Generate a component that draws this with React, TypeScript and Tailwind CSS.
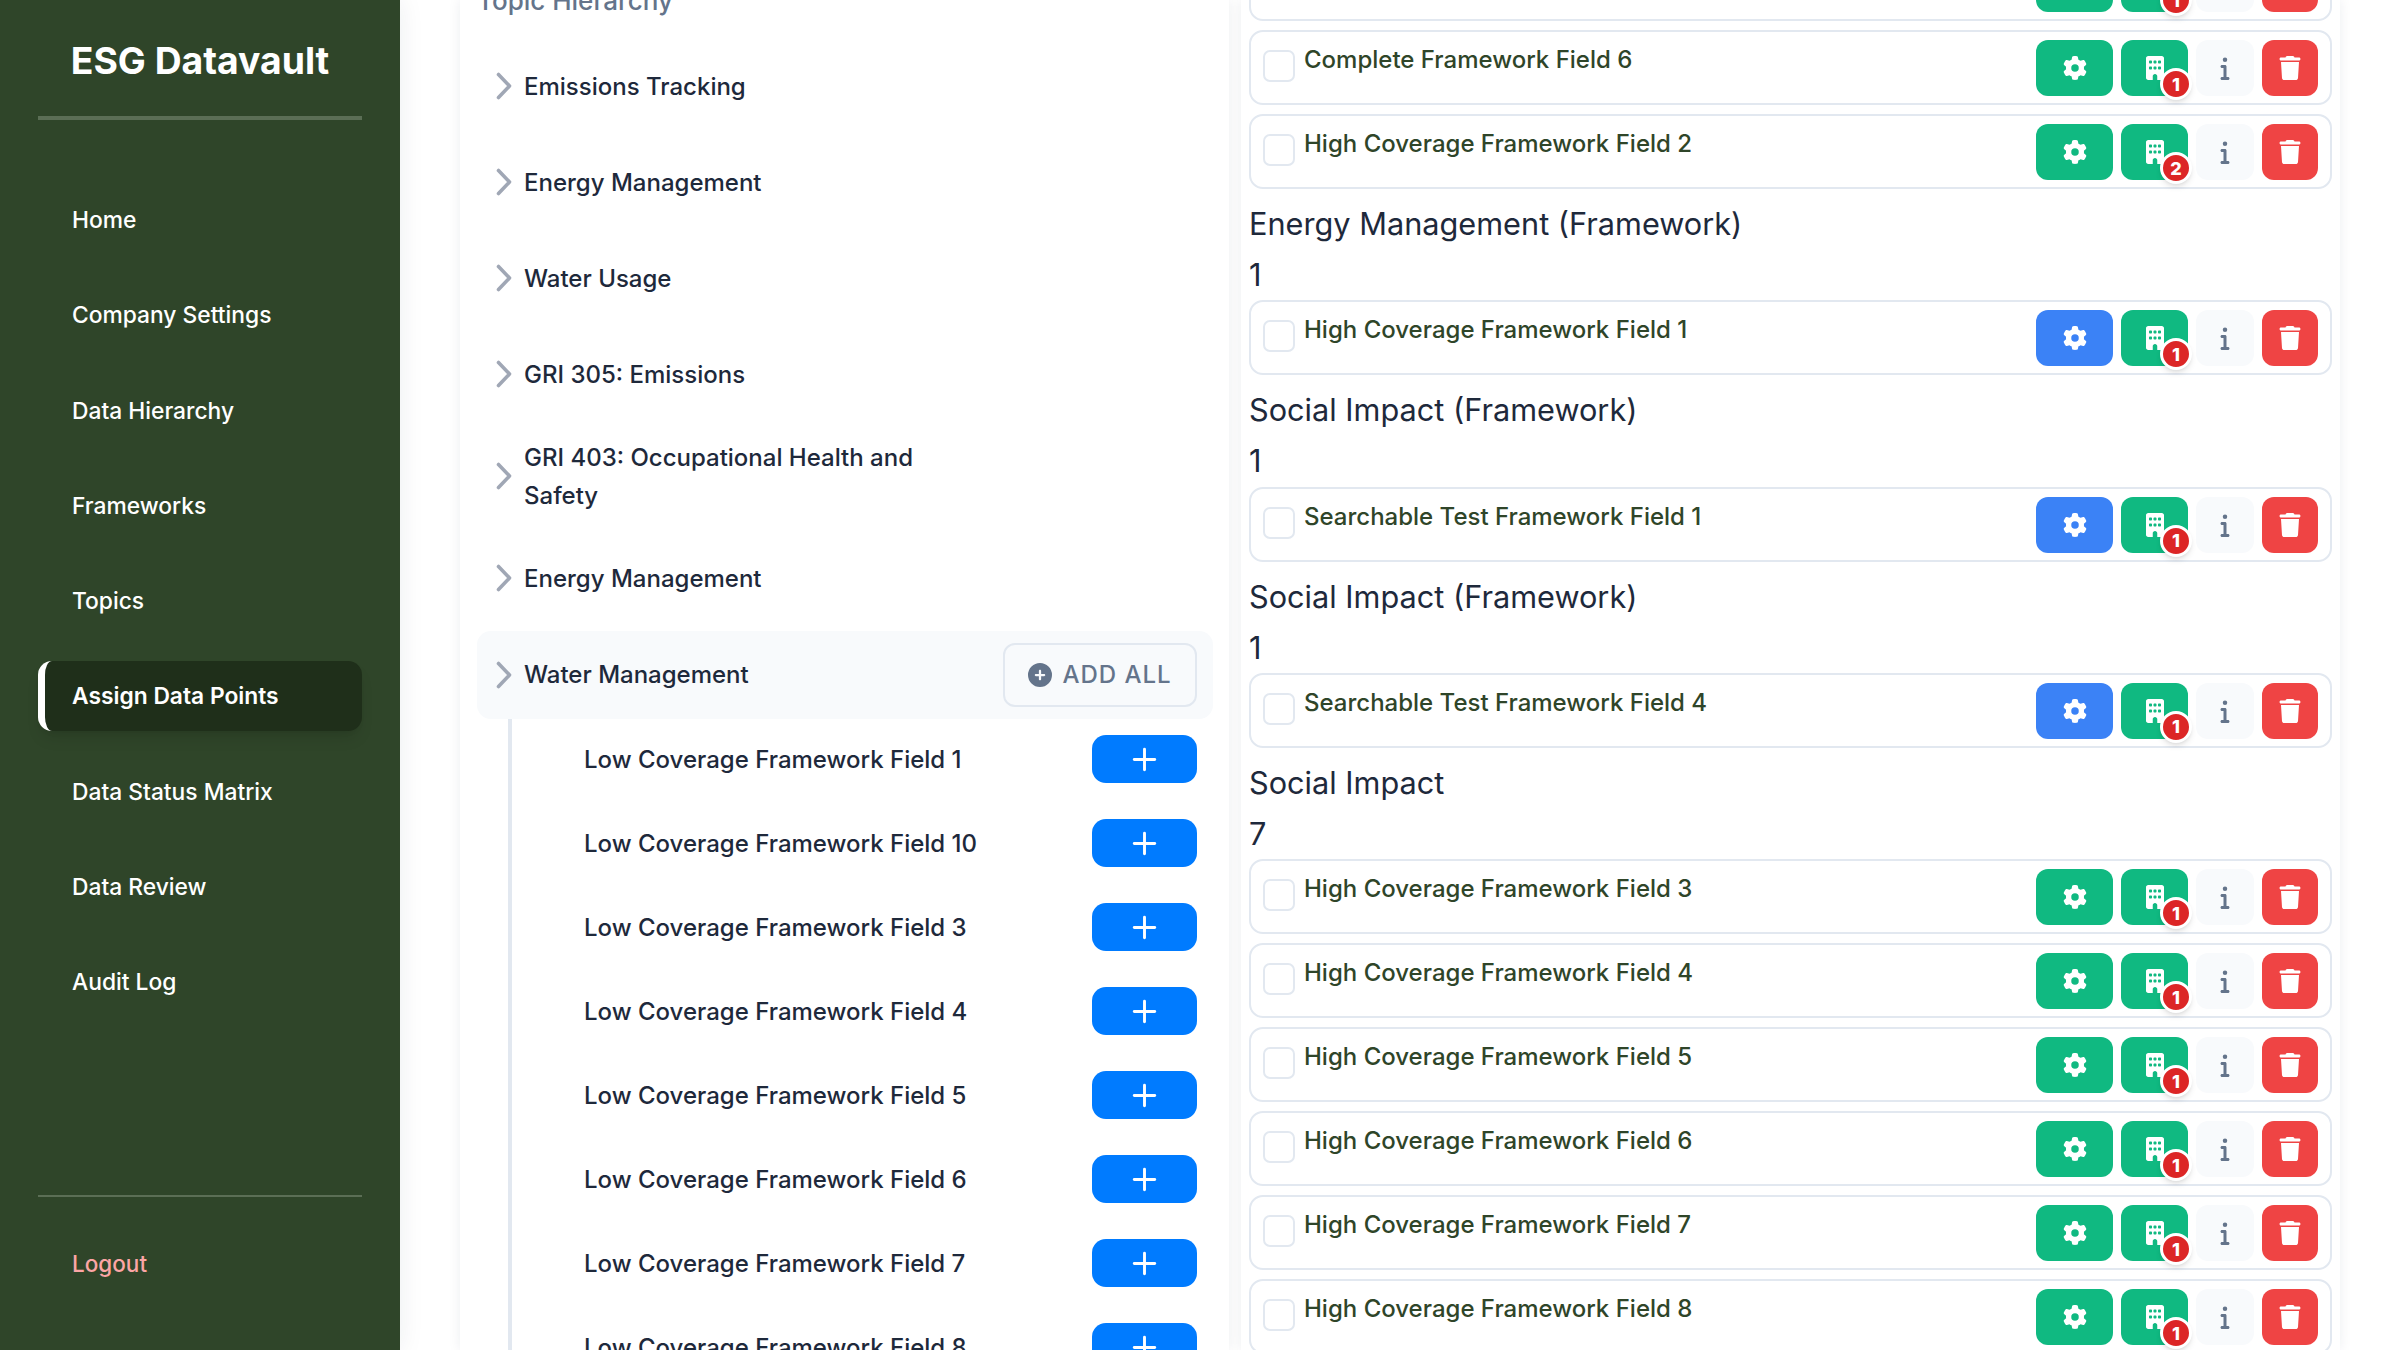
import React from 'react';
import { Plus } from 'lucide-react';
import { FaBuilding, FaCirclePlus, FaGear, FaInfo, FaTrash } from 'react-icons/fa6';

const navItems = [
  'Home',
  'Company Settings',
  'Data Hierarchy',
  'Frameworks',
  'Topics',
  'Assign Data Points',
  'Data Status Matrix',
  'Data Review',
  'Audit Log',
];

const topics = ['Emissions Tracking', 'Energy Management', 'Water Usage', 'GRI 305: Emissions'];

const lowFields = [1, 10, 3, 4, 5, 6, 7, 8];

interface FieldRowProps {
  name: string;
  count?: number;
  configured?: boolean;
}

const Chevron = () => (
  <svg viewBox="0 0 16 28" className="w-4 h-7 shrink-0 text-[#a0a7b5]" fill="none" stroke="currentColor" strokeWidth="3.6" strokeLinecap="round" strokeLinejoin="round">
    <path d="M2.5 2.5l11 11.5-11 11.5" />
  </svg>
);

const FieldRow = ({ name, count = 1, configured = false }: FieldRowProps) => (
  <div className="h-[75px] shrink-0 mb-[9px] border-2 border-[#e2e8f0] rounded-[14px] bg-white flex items-start px-3 pt-2">
    <span className="w-8 h-8 mt-[10px] shrink-0 border-2 border-[#e2e8f0] rounded-[7px] bg-white" />
    <span className="ml-[9px] flex-1 text-[#2f4529] text-[24px] font-medium leading-[34px] mt-[3px]">{name}</span>
    <div className="flex gap-2">
      <button className={`w-[77px] h-14 rounded-xl flex items-center justify-center text-white text-[24px] ${configured ? 'bg-[#3b82f6]' : 'bg-[#10b981]'}`}>
        <FaGear />
      </button>
      <button className="relative w-[67px] h-14 rounded-xl bg-[#10b981] flex items-center justify-center text-white text-[24px]">
        <FaBuilding />
        <span className="absolute -right-1 -bottom-1 w-8 h-8 rounded-full bg-[#dc2626] border-[3px] border-white shadow-md text-white text-[18px] font-extrabold flex items-center justify-center">
          {count}
        </span>
      </button>
      <button className="w-[58px] h-14 rounded-xl bg-[#f8fafc] flex items-center justify-center text-[#64748b] text-[24px]">
        <FaInfo />
      </button>
      <button className="w-14 h-14 rounded-xl bg-[#ef4444] flex items-center justify-center text-white text-[24px]">
        <FaTrash />
      </button>
    </div>
  </div>
);

const SectionHead = ({ title, count }: { title: string; count: number }) => (
  <div className="text-[#1e293b] text-[30.7px] leading-[51.15px]">
    <div>{title}</div>
    <div>{count}</div>
  </div>
);

export default function App() {
  return (
    <div className="h-screen w-full overflow-hidden flex bg-white font-['Inter',sans-serif]">
      <aside className="w-[400px] shrink-0 h-full bg-[#2f4529] flex flex-col px-[38px] shadow-[0_0_24px_rgba(30,41,59,0.08)] z-10">
        <div className="h-[120px] border-b-4 border-[#5b6e55] pt-[38px] text-center text-white text-[37.3px] font-bold leading-[46px]">
          ESG Datavault
        </div>
        <nav className="mt-[65px] flex flex-col gap-[25.3px]">
          {navItems.map((item) =>
            item === 'Assign Data Points' ? (
              <div key={item} className="h-[70px] rounded-[14px] bg-[#1f2f1a] border-l-[7px] border-white pl-[27px] flex items-center text-white text-[22.8px] font-semibold shadow-lg">
                {item}
              </div>
            ) : (
              <div key={item} className="h-[70px] pl-[34px] flex items-center text-white text-[22.8px] font-medium">
                {item}
              </div>
            ),
          )}
        </nav>
        <div className="mt-auto border-t-2 border-[#5b6e55] pt-[32px] pb-[51px]">
          <div className="h-[70px] pl-[34px] flex items-center text-[#fca5a5] text-[22.5px] font-medium">Logout</div>
        </div>
      </aside>

      <main className="flex-1 h-full flex pl-[60px] pr-[60px] gap-3 min-w-0">
        <section className="w-[769px] shrink-0 h-full bg-white shadow-[0_0_12px_rgba(30,41,59,0.08)]">
          <div className="h-full overflow-hidden pl-[17px] pr-4">
            <div className="-mt-[15px] flex flex-col">
              <div className="text-[#64748b] text-[26px] font-medium leading-[32px] mb-[21px]">Topic Hierarchy</div>
              {topics.map((t) => (
                <div key={t} className="h-[96px] shrink-0 flex items-center pl-[19px] gap-3 text-[#1e293b] text-[24px] font-medium">
                  <Chevron />
                  <span className="pt-[2px]">{t}</span>
                </div>
              ))}
              <div className="h-[108px] shrink-0 flex items-center pl-[19px] gap-3 text-[#1e293b] text-[24px] font-medium leading-[38px]">
                <Chevron />
                <span className="w-[430px] pt-[2px]">GRI 403: Occupational Health and Safety</span>
              </div>
              <div className="h-[96px] shrink-0 flex items-center pl-[19px] gap-3 text-[#1e293b] text-[24px] font-medium">
                <Chevron />
                <span className="pt-[2px]">Energy Management</span>
              </div>
              <div className="h-[88px] mt-[5px] shrink-0 rounded-[14px] bg-[#f8fafc] flex items-center pl-[19px] pr-4 gap-3 text-[#1e293b] text-[24px] font-medium">
                <Chevron />
                <span className="flex-1">Water Management</span>
                <button className="w-[194px] h-16 rounded-xl border-2 border-[#e2e8f0] flex items-center justify-center gap-[10px] text-[#64748b] text-[24px]">
                  <FaCirclePlus />
                  <span className="tracking-[1px]">ADD ALL</span>
                </button>
              </div>
              <div className="ml-[31px] border-l-4 border-[#e2e8f0] pl-[72px] pr-4 pt-4 flex flex-col gap-9">
                {lowFields.map((n) => (
                  <div key={n} className="h-12 shrink-0 flex items-center justify-between text-[#1e293b] text-[24px] font-medium">
                    <span className="pt-[2px]">Low Coverage Framework Field {n}</span>
                    <button className="w-[105px] h-12 rounded-[14px] bg-[#007bff] flex items-center justify-center text-white">
                      <Plus size={35} strokeWidth={2} />
                    </button>
                  </div>
                ))}
              </div>
            </div>
          </div>
        </section>

        <section className="flex-1 min-w-0 h-full bg-white shadow-[0_0_12px_rgba(30,41,59,0.08)]">
          <div className="h-full overflow-hidden px-2">
            <div className="-mt-[54px] flex flex-col">
              <FieldRow name="Complete Framework Field 5" />
              <FieldRow name="Complete Framework Field 6" />
              <FieldRow name="High Coverage Framework Field 2" count={2} />
              <SectionHead title="Energy Management (Framework)" count={1} />
              <FieldRow name="High Coverage Framework Field 1" configured />
              <SectionHead title="Social Impact (Framework)" count={1} />
              <FieldRow name="Searchable Test Framework Field 1" configured />
              <SectionHead title="Social Impact (Framework)" count={1} />
              <FieldRow name="Searchable Test Framework Field 4" configured />
              <SectionHead title="Social Impact" count={7} />
              <FieldRow name="High Coverage Framework Field 3" />
              <FieldRow name="High Coverage Framework Field 4" />
              <FieldRow name="High Coverage Framework Field 5" />
              <FieldRow name="High Coverage Framework Field 6" />
              <FieldRow name="High Coverage Framework Field 7" />
              <FieldRow name="High Coverage Framework Field 8" />
            </div>
          </div>
        </section>
      </main>
    </div>
  );
}
